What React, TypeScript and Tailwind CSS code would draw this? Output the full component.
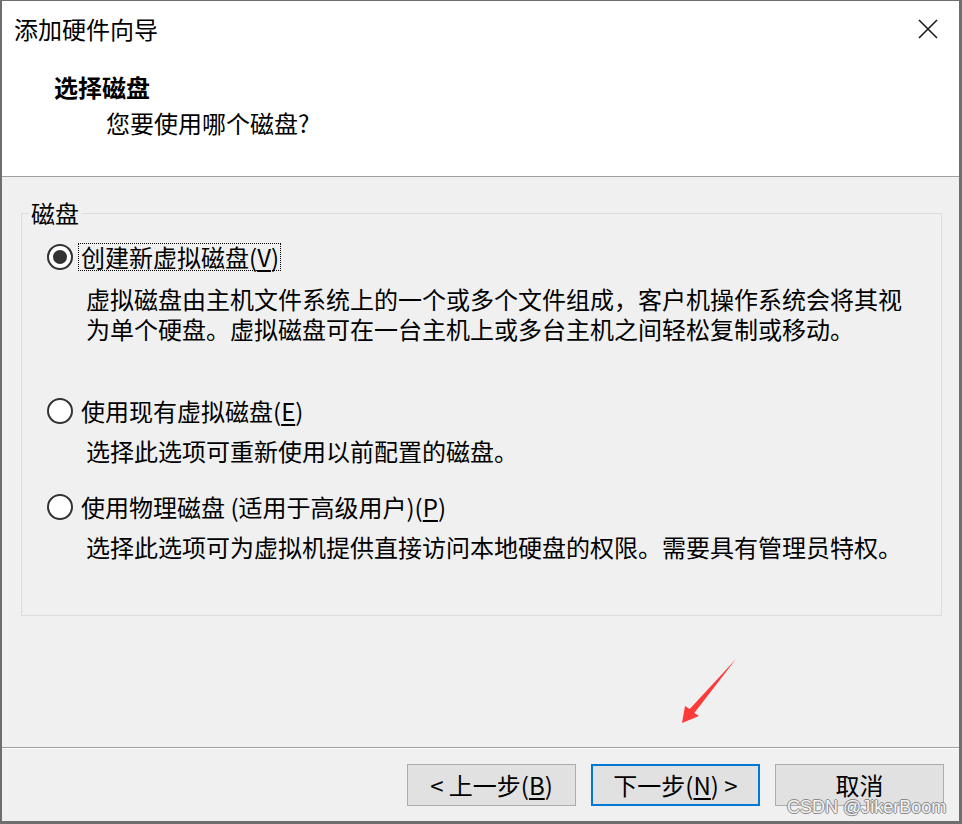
import React from "react"

interface IRadioRow {
  checked?: boolean
  focused?: boolean
  label: string
  mnemonic: string
  className?: string
}

function RadioRow({ checked, focused, label, mnemonic, className }: IRadioRow) {
  return (
    <div className={"flex items-center h-[28px] pl-[25px] " + (className ?? "")}>
      <span className="w-[26px] h-[26px] shrink-0 rounded-full border-2 border-[#333333] bg-white flex items-center justify-center">
        {checked && <span className="w-[14px] h-[14px] rounded-full bg-[#333333]" />}
      </span>
      <span
        className={
          "ml-[5px] pl-[2px] pr-[1px] leading-[26px] whitespace-nowrap border border-dotted " +
          (focused ? "border-black" : "border-transparent")
        }
      >
        {label}(<u className="underline-offset-[3px]">{mnemonic}</u>)
      </span>
    </div>
  )
}

function WizardButton({
  children,
  focused,
}: {
  children: React.ReactNode
  focused?: boolean
}) {
  return (
    <button
      className={
        "w-[169px] h-[42px] bg-[#e1e1e1] text-[24px] leading-[30px] text-black flex items-center justify-center " +
        (focused ? "border-2 border-[#0078d7]" : "border border-[#adadad]")
      }
    >
      {children}
    </button>
  )
}

export default function App() {
  return (
    <div className="relative w-[962px] h-[824px] flex flex-col bg-[#f0f0f0] border-[#6e6e6e] border-t border-l-2 border-r-[3px] border-b-[3px] text-black font-['Noto_Sans_CJK_SC','Noto_Sans',sans-serif] text-[24px]">
      {/* header */}
      <div className="h-[176px] shrink-0 bg-white border-b border-[#a0a0a0]">
        <div className="flex justify-between pt-[13px] pl-[12px] pr-[21px]">
          <span className="leading-[30px]">添加硬件向导</span>
          <svg className="mt-[5px] w-[20px] h-[20px]" viewBox="0 0 20 20" fill="none">
            <path d="M1 1L19 19M19 1L1 19" stroke="#1a1a1a" strokeWidth="1.6" />
          </svg>
        </div>
        <div className="mt-[28px] pl-[52px] leading-[30px] font-bold">选择磁盘</div>
        <div className="mt-[6px] pl-[104px] leading-[30px]">您要使用哪个磁盘?</div>
      </div>

      {/* body */}
      <div className="h-[570px] shrink-0 pt-[24px] pl-[19px]">
        <fieldset className="w-[921px] h-[415px] border border-[#dcdcdc]">
          <legend className="ml-[7px] px-[2px] leading-[24px]">磁盘</legend>
          <div className="pt-[18px]">
            <RadioRow checked focused label="创建新虚拟磁盘" mnemonic="V" />
            <p className="mt-[13px] pl-[64px] leading-[30px] whitespace-nowrap">
              虚拟磁盘由主机文件系统上的一个或多个文件组成，客户机操作系统会将其视
              <br />
              为单个硬盘。虚拟磁盘可在一台主机上或多台主机之间轻松复制或移动。
            </p>

            <RadioRow className="mt-[53px]" label="使用现有虚拟磁盘" mnemonic="E" />
            <p className="mt-[11px] pl-[64px] leading-[30px] whitespace-nowrap">
              选择此选项可重新使用以前配置的磁盘。
            </p>

            <RadioRow className="mt-[27px]" label="使用物理磁盘 (适用于高级用户)" mnemonic="P" />
            <p className="mt-[11px] pl-[64px] leading-[30px] whitespace-nowrap">
              选择此选项可为虚拟机提供直接访问本地硬盘的权限。需要具有管理员特权。
            </p>
          </div>
        </fieldset>
      </div>

      {/* footer */}
      <div className="h-[74px] shrink-0 border-t border-[#a0a0a0]">
        <div className="h-full border-t border-white flex justify-end gap-[15px] pt-[15px] pr-[15px]">
          <WizardButton>
            &lt; 上一步(<u className="underline-offset-[3px]">B</u>)
          </WizardButton>
          <WizardButton focused>
            下一步(<u className="underline-offset-[3px]">N</u>) &gt;
          </WizardButton>
          <WizardButton>取消</WizardButton>
        </div>
      </div>

      {/* red annotation arrow */}
      <svg
        className="absolute left-[678px] top-[655px] w-[60px] h-[70px]"
        viewBox="0 0 60 70"
      >
        <polygon
          points="56,3 14.3,56.9 19,60 2,67 5,50 9.7,53.1"
          fill="#ff3a3a"
        />
      </svg>

      {/* watermark */}
      <span className="absolute left-[785px] top-[795px] font-['Liberation_Sans',sans-serif] text-[18px] leading-[22px] text-[#f4f4f4] [text-shadow:1px_0_0_#8a8a8a,-1px_0_0_#8a8a8a,0_1px_0_#8a8a8a,0_-1px_0_#8a8a8a]">
        CSDN @JikerBoom
      </span>
    </div>
  )
}
